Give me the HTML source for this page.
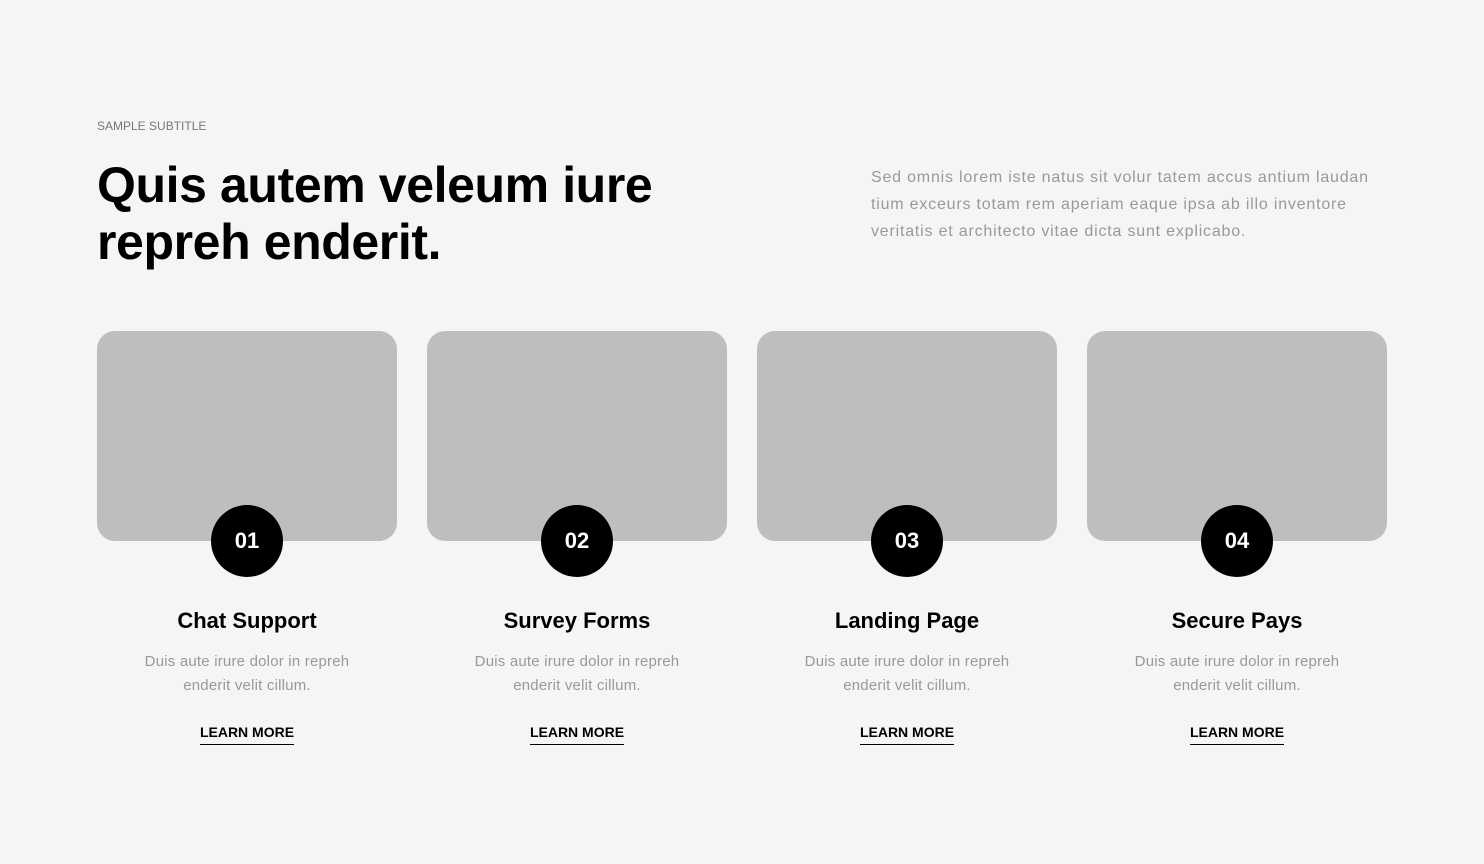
<!DOCTYPE html>
<html><head><style>
body{margin:0;background:#f5f5f5;font-family:"Liberation Sans",sans-serif;width:1484px;height:864px;position:relative;overflow:hidden}
.sub{position:absolute;left:97px;top:119px;font-size:12px;color:#777}
h1{position:absolute;left:97px;top:157px;margin:0;font-size:50px;line-height:57px;font-weight:700;color:#000;letter-spacing:-0.4px}
.desc{position:absolute;left:871px;top:164px;width:580px;font-size:16px;line-height:27px;color:#999;white-space:nowrap;letter-spacing:0.8px}
.card{position:absolute;top:331px;width:300px}
.img{height:210px;background:#bdbebf;border-radius:18px}
.num{position:absolute;left:114px;top:174px;width:72px;height:72px;border-radius:50%;background:#000;color:#fff;font-weight:700;font-size:22px;line-height:72px;text-align:center}
.t{text-align:center;margin-top:67px;font-size:22px;font-weight:700;color:#000}
.p{text-align:center;margin-top:16px;font-size:15px;line-height:24px;color:#999;letter-spacing:0.2px}
.l{text-align:center;margin-top:26px}
.l span{font-size:14px;font-weight:700;color:#000;border-bottom:1.5px solid #000;padding-bottom:4px}
</style></head><body>
<div class="sub">SAMPLE SUBTITLE</div>
<h1>Quis autem veleum iure<br>repreh enderit.</h1>
<div class="desc">Sed omnis lorem iste natus sit volur tatem accus antium laudan<br>tium exceurs totam rem aperiam eaque ipsa ab illo inventore<br>veritatis et architecto vitae dicta sunt explicabo.</div>
<div class="card" style="left:97px"><div class="img"></div><div class="num">01</div><div class="t">Chat Support</div><div class="p">Duis aute irure dolor in repreh<br>enderit velit cillum.</div><div class="l"><span>LEARN MORE</span></div></div>
<div class="card" style="left:427px"><div class="img"></div><div class="num">02</div><div class="t">Survey Forms</div><div class="p">Duis aute irure dolor in repreh<br>enderit velit cillum.</div><div class="l"><span>LEARN MORE</span></div></div>
<div class="card" style="left:757px"><div class="img"></div><div class="num">03</div><div class="t">Landing Page</div><div class="p">Duis aute irure dolor in repreh<br>enderit velit cillum.</div><div class="l"><span>LEARN MORE</span></div></div>
<div class="card" style="left:1087px"><div class="img"></div><div class="num">04</div><div class="t">Secure Pays</div><div class="p">Duis aute irure dolor in repreh<br>enderit velit cillum.</div><div class="l"><span>LEARN MORE</span></div></div>
</body></html>
